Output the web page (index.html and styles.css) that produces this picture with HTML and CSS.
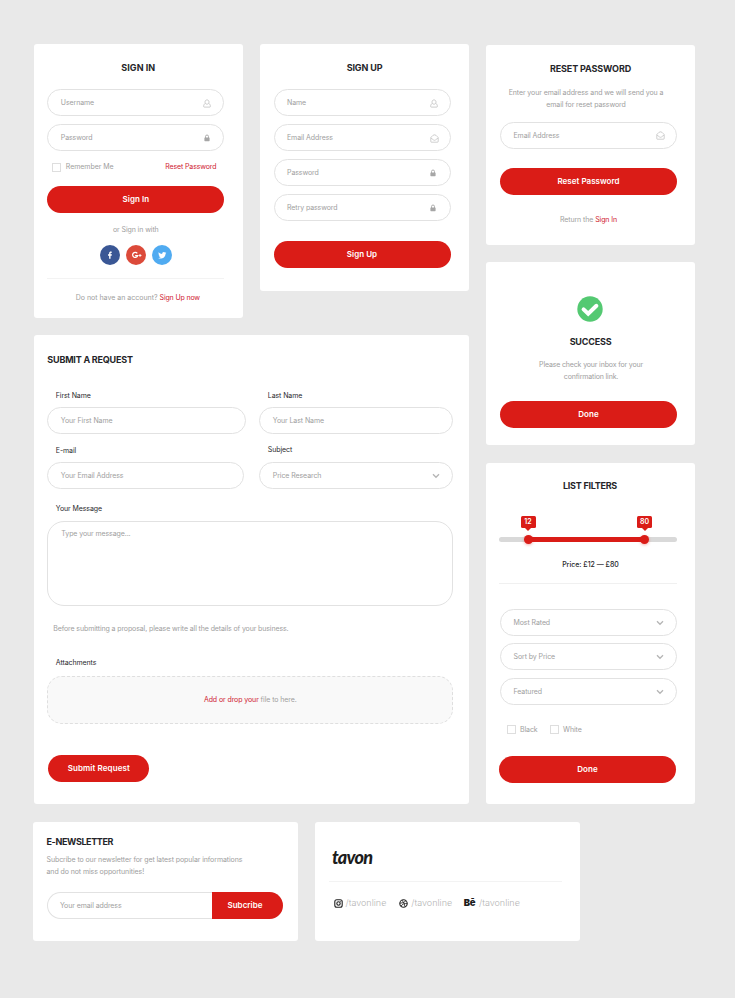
FILE: index.html
```html
<!DOCTYPE html>
<html lang="en">
<head>
<meta charset="utf-8">
<title>Tavon form kit</title>
<link rel="stylesheet" href="styles.css">
</head>
<body>
<svg class="defs" width="0" height="0" aria-hidden="true">
  <symbol id="user" viewBox="0 0 8 9"><path d="M4 .9c1.200 0 2 .9 2 2.100S5.200 5.200 4 5.200 2 4.200 2 3 2.800.9 4 .9zM2.300 4.700C1.300 4.900.7 5.500.7 6.500v1.100c0 .3.2.5.5.5h5.600c.3 0 .5-.2.5-.5V6.500c0-1-.6-1.600-1.600-1.800" fill="none" stroke="currentColor" stroke-width=".8"/></symbol>
  <symbol id="mail" viewBox="0 0 9 9"><path d="M.8 3.500 3 1.300Q4.500.3 6 1.300l2.200 2.200v4.100q0 .6-.6.6H1.400q-.6 0-.6-.6zM1 4l2.600 2q.9.600 1.800 0L8 4" fill="none" stroke="currentColor" stroke-width=".75" stroke-linejoin="round"/></symbol>
  <symbol id="lock" viewBox="0 0 6 8"><path d="M1.500 4V2.600a1.500 1.600 0 0 1 3 0V4" fill="none" stroke="currentColor" stroke-width=".9"/><rect x=".4" y="3.500" width="5.200" height="3.700" rx=".6" fill="currentColor"/></symbol>
  <symbol id="chev" viewBox="0 0 8 6"><path d="m1 1.300 3 3 3-3" fill="none" stroke="currentColor" stroke-width="1.300"/></symbol>
</svg>
<main class="board">
  <div class="main-row">
    <div class="left">
      <div class="pair">
        <section class="card signin">
          <h2>SIGN IN</h2>
          <div class="field"><span>Username</span><svg class="i-user"><use href="#user"/></svg></div>
          <div class="field"><span>Password</span><svg class="i-lock"><use href="#lock"/></svg></div>
          <div class="remember"><label><i class="box"></i>Remember Me</label><a>Reset Password</a></div>
          <button class="btn">Sign In</button>
          <p class="or">or Sign in with</p>
          <div class="social">
            <span class="fb"><svg viewBox="0 0 20 20"><path d="M8.900 13.500v-3.100H7.800V9.100h1.100v-.9c0-1.200.7-1.800 1.800-1.800l.9.1v1.100H11c-.5 0-.7.3-.7.7v.8h1.300l-.2 1.300h-1.100v3.100z" fill="#fff"/></svg></span>
            <span class="gp"><svg viewBox="0 0 20 20"><path d="M11 8.200A2.500 2.500 0 1 0 11.400 10.300H8.900" fill="none" stroke="#fff" stroke-width="1.200"/><path d="M12.300 10.200h2.800M13.700 8.800v2.800" stroke="#fff" stroke-width=".9"/></svg></span>
            <span class="tw"><svg viewBox="-3 -3 30 30"><path d="M18 8.400c-.4.200-.9.300-1.400.4.500-.3.900-.8 1.100-1.400-.5.300-1 .5-1.600.6a2.500 2.500 0 0 0-4.200 2.200c-2-.1-3.900-1.100-5.100-2.600-.7 1.200-.3 2.600.8 3.300-.4 0-.8-.1-1.100-.3 0 1.200.8 2.200 2 2.500-.4.100-.8.100-1.100 0 .3 1 1.200 1.700 2.300 1.700A5 5 0 0 1 6 15.900c3.400 2.100 10.800.8 10.800-6.200.5-.3.900-.8 1.200-1.300z" fill="#fff"/></svg></span>
          </div>
          <hr>
          <p class="foot">Do not have an account? <a>Sign Up now</a></p>
        </section>
        <section class="card signup">
          <h2>SIGN UP</h2>
          <div class="field"><span>Name</span><svg class="i-user"><use href="#user"/></svg></div>
          <div class="field"><span>Email Address</span><svg class="i-mail"><use href="#mail"/></svg></div>
          <div class="field"><span>Password</span><svg class="i-lock"><use href="#lock"/></svg></div>
          <div class="field"><span>Retry password</span><svg class="i-lock"><use href="#lock"/></svg></div>
          <button class="btn">Sign Up</button>
        </section>
      </div>
      <section class="card request">
        <h2>SUBMIT A REQUEST</h2>
        <div class="cols names">
          <div><label class="lab">First Name</label><div class="field"><span>Your First Name</span></div></div>
          <div><label class="lab">Last Name</label><div class="field"><span>Your Last Name</span></div></div>
        </div>
        <div class="cols contact">
          <div><label class="lab">E-mail</label><div class="field"><span>Your Email Address</span></div></div>
          <div><label class="lab subject">Subject</label><div class="field"><span>Price Research</span><svg class="i-chev"><use href="#chev"/></svg></div></div>
        </div>
        <label class="lab">Your Message</label>
        <div class="message">Type your message...</div>
        <p class="note">Before submitting a proposal, please write all the details of your business.</p>
        <label class="lab">Attachments</label>
        <div class="drop"><a>Add or drop your</a>&nbsp;file to here.</div>
        <button class="btn submit">Submit Request</button>
      </section>
    </div>
    <div class="right">
      <section class="card reset">
        <h2>RESET PASSWORD</h2>
        <p class="copy">Enter your email address and we will send you a<br>email for reset password</p>
        <div class="field"><span>Email Address</span><svg class="i-mail"><use href="#mail"/></svg></div>
        <button class="btn">Reset Password</button>
        <p class="back">Return the <a>Sign In</a></p>
      </section>
      <section class="card success">
        <svg class="tick" viewBox="0 0 26 26"><circle cx="13" cy="13" r="12.700" fill="#54c972"/><path d="m6.600 13.400 4.600 4.400 8.200-8" fill="none" stroke="#fff" stroke-width="4" stroke-linecap="round"/></svg>
        <h2>SUCCESS</h2>
        <p class="copy">Please check your inbox for your<br>confirmation link.</p>
        <button class="btn">Done</button>
      </section>
      <section class="card filters">
        <h2>LIST FILTERS</h2>
        <div class="slider">
          <div class="range"></div>
          <i class="knob low"></i><i class="knob high"></i>
          <b class="tip low">12</b><b class="tip high">80</b>
        </div>
        <p class="price">Price: £12 — £80</p>
        <hr>
        <div class="field"><span>Most Rated</span><svg class="i-chev"><use href="#chev"/></svg></div>
        <div class="field"><span>Sort by Price</span><svg class="i-chev"><use href="#chev"/></svg></div>
        <div class="field"><span>Featured</span><svg class="i-chev"><use href="#chev"/></svg></div>
        <div class="checks"><label><i class="box"></i>Black</label><label><i class="box"></i>White</label></div>
        <button class="btn">Done</button>
      </section>
    </div>
  </div>
  <div class="bottom">
    <section class="card news">
      <h2>E-NEWSLETTER</h2>
      <p class="copy">Subcribe to our newsletter for get latest popular informations<br>and do not miss opportunities!</p>
      <div class="subscribe"><span>Your email address</span><button class="btn">Subcribe</button></div>
    </section>
    <section class="card brand">
      <div class="logo">tavon</div>
      <hr>
      <div class="links">
        <span><svg viewBox="0 0 9 9"><g fill="none" stroke="#222" stroke-width="1.100"><rect x=".8" y=".8" width="7.400" height="7.400" rx="2"/><circle cx="4.500" cy="4.500" r="1.700"/></g><circle cx="6.700" cy="2.300" r=".5" fill="#222"/></svg>/tavonline</span>
        <span><svg viewBox="0 0 9 9"><g fill="none" stroke="#222" stroke-width=".85"><circle cx="4.500" cy="4.500" r="3.700" stroke-width="1.100"/><path d="M3 1.100Q5.500 4 6 7.700M.9 4.200Q5 4.300 7 1.700M2 7.200Q4 3.900 8.200 4.700"/></g></svg>/tavonline</span>
        <span><b>Bē</b>/tavonline</span>
      </div>
    </section>
  </div>
</main>
</body>
</html>
```
FILE: styles.css
```css
* { box-sizing: border-box; }
body {
  margin: 0;
  background: #e9e9e9;
  color: #9e9e9e;
  font: 400 7px/12px Inter, "Open Sans", sans-serif;
  letter-spacing: -.09px;
}
.defs { display: block; }
.board { width: 735px; height: 998px; padding: 44px 40px 0 32.5px; }
.main-row { display: flex; justify-content: space-between; padding-left: 1.5px; height: 777.5px; }
.left { width: 435px; }
.right { width: 209px; padding-top: 1px; }
.pair { display: flex; justify-content: space-between; align-items: flex-start; height: 291px; }
.card { background: #fff; border-radius: 3px; padding: 16px 18.5px 0 13.5px; display: flow-root; }
h2 { margin: 0 -5px 0 0; font-size: 9px; line-height: 16px; font-weight: 700; letter-spacing: -.12px; color: #252529; text-align: center; }
p { margin: 0; text-align: center; }
a { color: #cf2030; }
hr { border: 0; height: 1px; background: #f3f3f3; margin: 0; }

.field {
  display: flex; align-items: center; justify-content: space-between;
  height: 27px; margin-bottom: 8px; padding: 1px 12px 0 12.5px;
  border: 1px solid #e2e2e2; border-radius: 14px;
}
.field svg { color: #c0c0c0; flex: none; }
.i-user { width: 8px; height: 9px; }
.i-mail { width: 9px; height: 9px; margin-right: -1px; }
.field .i-lock { width: 6px; height: 8px; margin-right: 1.5px; color: #a6a6a6; }
.field .i-chev { width: 8px; height: 6px; color: #b5b5b5; }
.btn {
  display: block; width: 100%; height: 27px; padding: 0; border: 0; border-radius: 14px;
  background: #da1c17; color: #fff;
  font: 600 8px/27px Inter, "Open Sans", sans-serif; letter-spacing: .03px; text-align: center;
}
.box { width: 9px; height: 9px; border: 1px solid #dedede; flex: none; }
label { display: flex; align-items: center; }

.signin, .signup { width: 209px; }
.signin { height: 274px; padding-left: 13.300px; padding-right: 18.700px; }
.signup { height: 247px; }
.signin h2, .signup h2 { margin-bottom: 13px; }
.signin h2 { letter-spacing: .05px; }
.signup .btn { margin-top: 20.300px; }
.remember { display: flex; justify-content: space-between; height: 12px; margin: 10px 8px 13px 4.500px; letter-spacing: -.04px; }
.remember .box { margin-right: 5px; }
.remember a { letter-spacing: -.14px; }
.or { margin-top: 10.500px; }
.social { display: flex; justify-content: center; gap: 5.500px; margin: 9px 0 13px; }
.social span { width: 20.500px; height: 20.500px; border-radius: 50%; }
.social svg { display: block; width: 100%; height: 100%; }
.fb { background: #3a5795; }
.gp { background: #dc4a3a; }
.tw { background: #50abf1; }
.foot { margin-top: 12.500px; padding-left: 4px; letter-spacing: 0; }
.foot a { letter-spacing: -.15px; }

.request { height: 469px; padding: 17px 15.700px 0 13.300px; }
.request h2 { text-align: left; letter-spacing: -.2px; }
.lab { display: block; padding-left: 8.500px; height: 12px; color: #29292d; }
.request .field { margin-bottom: 0; padding-right: 12.500px; }
.cols { display: grid; }
.names { grid-template-columns: 199px 194px; column-gap: 13px; margin-top: 22px; }
.contact { grid-template-columns: 197px 194px; column-gap: 15px; margin: 10.300px 0 13.700px; }
.cols .lab { margin-bottom: 5.300px; }
.subject { position: relative; top: -1px; }
.message { height: 85px; margin: 6.200px 0 17.300px; padding: 6px 13px; border: 1px solid #e2e2e2; border-radius: 17px; }
.note { text-align: left; padding-left: 6px; letter-spacing: -.11px; margin-bottom: 21.500px; }
.drop { display: flex; align-items: center; justify-content: center; height: 48px; margin: 7px 0 31px; background: #f9f9f9; border: 1px dashed #dfdfdf; border-radius: 15px; }
.submit { width: 101px; margin-left: 1px; letter-spacing: .1px; }

.reset { height: 200px; }
.right .card { padding-left: 14px; padding-right: 18px; }
.right h2 { margin-right: -4px; }
.reset .copy { margin: 10px -5px 11px -10px; }
.reset .field { margin-bottom: 19.300px; padding-top: 0; }
.back { margin-top: 18.700px; }
.success { height: 183px; margin-top: 17px; }
.right .success { padding-top: 33.500px; }
.tick { display: block; width: 26px; height: 26px; margin: 0 auto 12.500px; position: relative; left: 1.500px; }
.success h2 { letter-spacing: -.2px; }
.success .copy { margin: 8.500px -5px 18px 0; letter-spacing: -.15px; }
.filters { height: 341px; margin-top: 17.500px; }
.right .filters { padding-top: 15.500px; }
.filters h2 { letter-spacing: -.25px; margin-right: 0; margin-left: 3px; }
.slider { position: relative; height: 5px; width: 178px; margin: 43px 0 16.500px -1px; border-radius: 3px; background: #d9d9d9; }
.range { height: 5px; margin: 0 33px 0 29px; background: #da1c17; }
.knob { position: absolute; top: -2px; width: 9px; height: 9px; border-radius: 50%; background: #da1c17; box-shadow: 0 1px 3px rgba(218, 28, 23, .35); }
.knob.low { left: 25px; }
.knob.high { left: 141px; }
.tip { position: absolute; top: -21px; width: 15px; height: 12px; border-radius: 1.500px; background: #da1c17; color: #fff; font-weight: 600; text-align: center; letter-spacing: 0; }
.tip::after { content: ""; position: absolute; left: 4.500px; top: 12px; border: 3px solid transparent; border-top-color: #da1c17; border-bottom: 0; }
.tip.low { left: 21.500px; }
.tip.high { left: 138px; }
.price { color: #252529; font-weight: 500; letter-spacing: 0; margin-left: 4px; }
.filters hr { margin: 12.500px 0 24.500px -1px; background: #f0f0f0; }
.filters .field { margin-bottom: 7.700px; }
.checks { display: flex; gap: 12px; margin: 19px 0 19.800px 6.500px; height: 12px; }
.checks .box { margin-right: 4.500px; }
.filters .btn { margin-left: -1px; }

.bottom { display: flex; gap: 16.500px; }
.news, .brand { width: 265.500px; height: 119.500px; }
.news { padding: 12.700px 15.500px 0 14px; }
.news h2 { text-align: left; letter-spacing: -.38px; }
.news .copy { text-align: left; margin: 4.300px 0 13.500px; }
.subscribe { display: flex; height: 27px; border: 1px solid #e2e2e2; border-right: 0; border-radius: 14px; }
.subscribe span { flex: 1; padding: 7px 0 0 12.500px; }
.subscribe .btn { width: 71px; margin-top: -1px; border-radius: 0 14px 14px 0; padding-right: 4px; }
.brand { padding: 23.500px 18px 0 14px; }
.logo { padding-left: 3.500px; height: 24px; color: #1c1c1c; font: italic 900 18px/24px Lato, sans-serif; letter-spacing: -.7px; }
.brand hr { margin-top: 12px; }
.links { display: flex; align-items: center; height: 12px; margin: 15.300px 0 0 5px; font-size: 9px; font-weight: 300; letter-spacing: 0; color: #b5b5b5; }
.links span { display: flex; align-items: center; margin-right: 13px; }
.links span:nth-child(2) { margin-right: 11.500px; }
.links svg { width: 9px; height: 9px; margin-right: 3px; }
.links b { color: #1c1c1c; font-weight: 900; font-size: 9.500px; letter-spacing: -.4px; margin-right: 4px; }
```
